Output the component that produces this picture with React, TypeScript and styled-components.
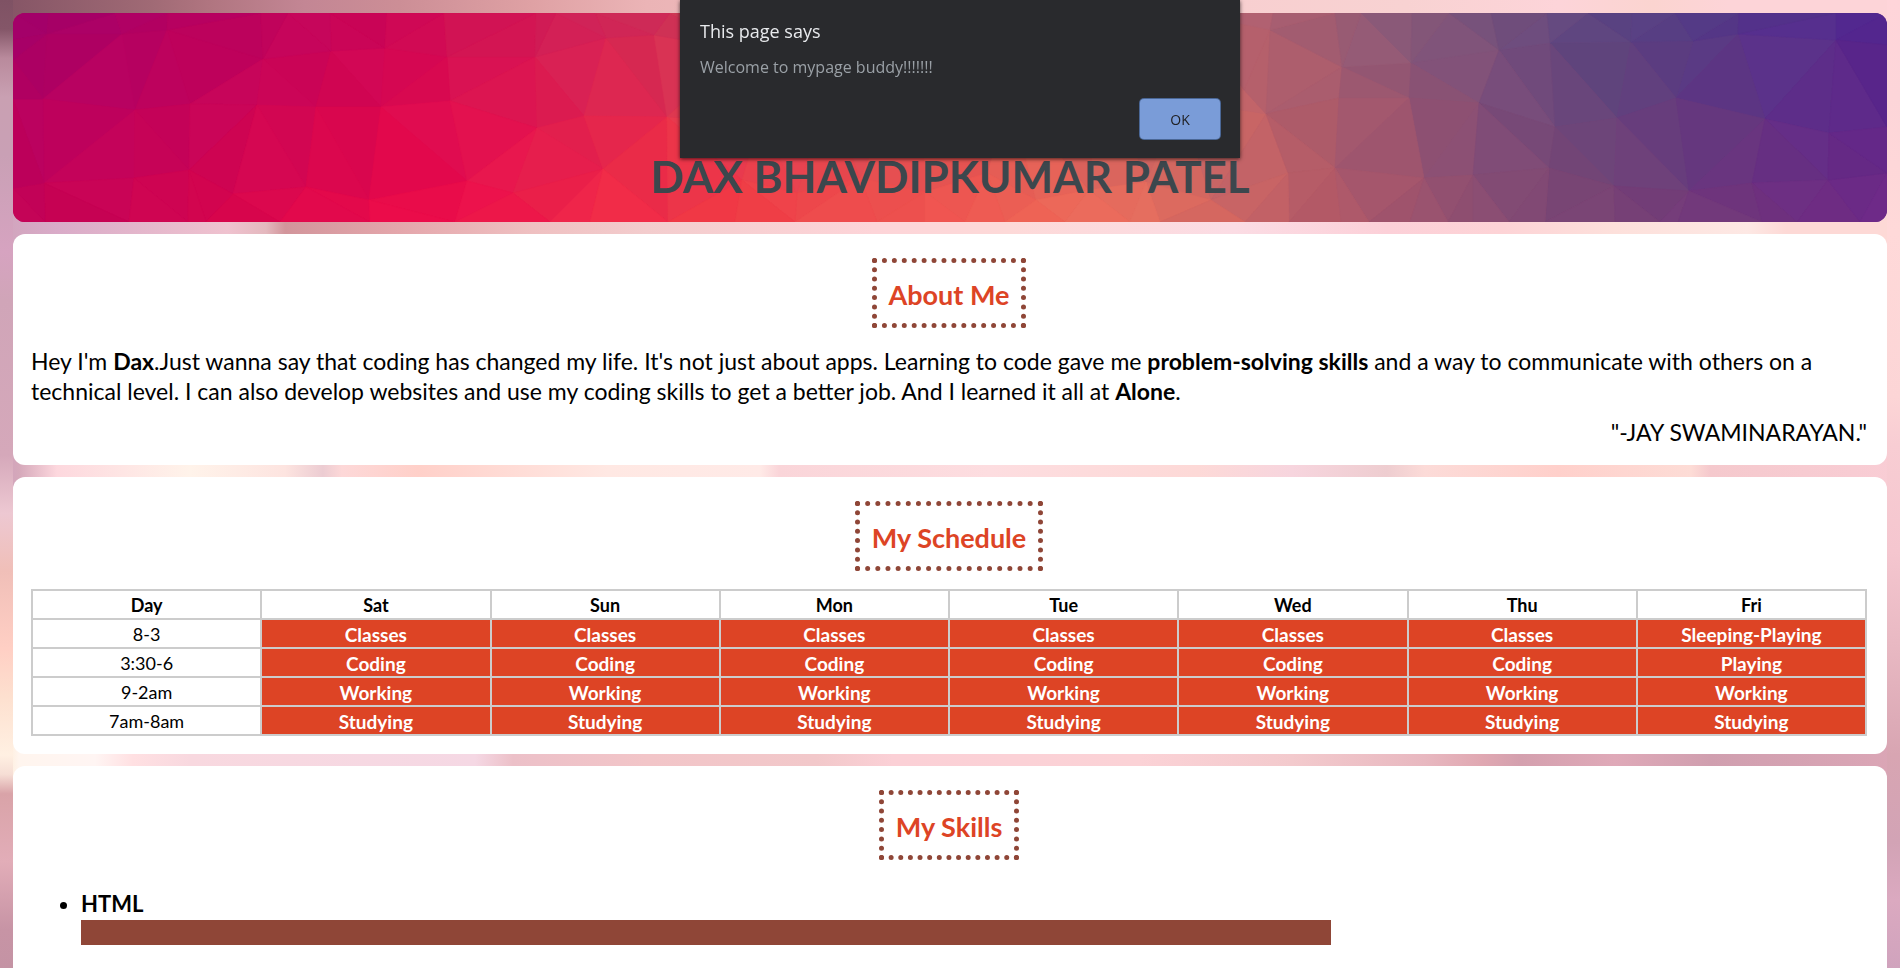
import React, { useMemo, useState } from "react";
import styled, { createGlobalStyle, css } from "styled-components";

const color = {
  accent: "#dd4425",
  brown: "#8f4637",
  rule: "#cccccc",
  title: "#3c474d",
  dialog: "#292a2d",
};

const hand = `"Comic Sans MS", "Comic Sans", Lato, sans-serif`;
const system = `"Segoe UI", "Open Sans", "Noto Sans", sans-serif`;

/* Soft pink bokeh: two vertical edge washes over four horizontal ones. */
const leftWash = `linear-gradient(180deg, #7f5264 0%, #845668 3%, #b98a9c 6%, #c9a0b2 10%, #c9a0b5 16%,
  #d6a3c0 26%, #d0a5b8 31%, #d5a8ba 47%, #edc8d2 53%, #f0bfb8 59%, #ffcfc4 67%, #fde0cf 72%,
  #fff0e2 78%, #f6ded5 80%, #d9a3a8 82%, #e2adb8 89%, #c794a5 96%, #c493a4 100%)`;
const rightWash = `linear-gradient(180deg, #ffd5da 0%, #fdd5d9 10%, #ffd9d9 24%, #fcd5d6 41%, #f8cdd3 46%,
  #f5c6cf 57%, #e8b8c2 67%, #d8a5b2 78%, #d2a3b5 87%, #dba9c0 93%, #d0a3bd 100%)`;
const topWash = `linear-gradient(90deg, #845465 0%, #a06a75 8%, #b07580 11%, #c38694 16%, #cc8e96 21%,
  #dfa1a4 28%, #ebb4b6 34%, #f8cfd0 65%, #f8d2d2 74%, #fdd4d9 82%, #fbd4d0 87%, #fdd4d8 91%)`;
const upperWash = `linear-gradient(90deg, #d0a4bc 0%, #d9abc8 3%, #efc2cf 12%, #e4b8be 14%, #d2959b 15%,
  #e4a6ab 21%, #efc0c1 28%, #f3cccd 34%, #fdd4d8 46%, #fdd9d8 53%, #fbdce4 65%, #fcd0d8 73%,
  #fdd3d6 79%, #fde0db 85%, #fde8e4 92%, #fdd9d6 94%)`;
const middleWash = `linear-gradient(90deg, #cfa0bd 0%, #d5a8ba 1%, #fdd8de 3%, #fff3ea 10%, #fde4e0 15%, #ecccd2 17%,
  #fdd8d8 18%, #ffd0c9 22%, #ffe8e3 32%, #ffeae7 40%, #fad5d9 41%, #fddde0 52%, #fdd9d7 63%,
  #f7d5de 68%, #eecdd0 73%, #fcdbd8 75%, #ffd0cb 82%, #fddcd6 89%, #f5c9cd 90%, #f9cdd5 100%)`;
const lowerWash = `linear-gradient(90deg, #fde8cf 0%, #fff5ee 1%, #fff5f3 5%, #ffe0e2 7%, #f8d8df 10%,
  #f5d8e4 25%, #ecc0c8 27%, #f2c5c8 34%, #f2c8ca 43%, #fbd0d6 47%, #fbd2d6 60%, #f3cacd 68%,
  #e8b8c0 75%, #e0a8b2 78%, #d4a0ae 80%, #dfa9b8 85%, #d09faf 90%, #dba6b6 100%)`;

const GlobalStyle = createGlobalStyle`
  *, *::before, *::after { box-sizing: border-box; }
  body {
    margin: 0;
    color: #000;
    font-family: ${hand};
    background:
      ${leftWash} left top / 13px 100% no-repeat,
      ${rightWash} right top / 13px 100% no-repeat,
      ${topWash} left 0 top 0 / 100% 120px no-repeat,
      ${upperWash} left 0 top 120px / 100% 230px no-repeat,
      ${middleWash} left 0 top 350px / 100% 260px no-repeat,
      ${lowerWash} left 0 top 610px / 100% 100% no-repeat;
    background-attachment: fixed;
  }
`;

const Page = styled.main`
  display: flex;
  flex-direction: column;
  gap: 12px;
  min-height: 100vh;
  padding: 13px 13px 0;
`;

const Hero = styled.header`
  display: grid;
  height: 209px;
  overflow: hidden;
  border-radius: 12px;
  background: linear-gradient(90deg, #b8005f, #e5104d 30%, #f05550 50%, #b05d6a 70%, #5f2588);
  > * { grid-area: 1 / 1; }
`;

const MeshArt = styled.svg`
  display: block;
  width: 100%;
  height: 209px;
`;

const Title = styled.h1`
  align-self: end;
  margin: 0 0 14px;
  color: ${color.title};
  font-size: 44px;
  line-height: 64px;
  text-align: center;
`;

const Card = styled.section<{ $open?: boolean }>`
  display: flex;
  flex-direction: column;
  padding: 24px 20px 18px 18px;
  background: #fff;
  border-radius: 12px;
  ${(p) => p.$open && css`
    flex: 1;
    border-radius: 12px 12px 0 0;
  `}
`;

const CardTitle = styled.h2`
  align-self: center;
  margin: 0 0 18px;
  padding: 4px 12px 0;
  border: 5px dotted ${color.brown};
  color: ${color.accent};
  font-size: 27px;
  line-height: 56px;
`;

const Paragraph = styled.p`
  margin: 0;
  font-size: 23px;
  line-height: 30px;
`;

const Signature = styled(Paragraph)`
  margin-top: 11px;
  text-align: right;
`;

const Timetable = styled.table`
  width: 100%;
  table-layout: fixed;
  border-collapse: collapse;
  font-size: 18px;
  line-height: 25px;
  text-align: center;
`;

const cell = css`
  padding: 2px 0 0;
  border: 2px solid ${color.rule};
`;
const HeadCell = styled.th`${cell}`;
const HourCell = styled.th`
  ${cell}
  font-weight: 400;
`;
const TaskCell = styled.td`
  ${cell}
  color: #fff;
  background: ${color.accent};
  font-size: 19px;
  font-weight: 700;
`;

const SkillList = styled.ul`
  margin: 11px 0 0;
  padding-left: 50px;
`;

const Skill = styled.li`
  font-size: 22px;
  font-weight: 700;
  line-height: 30px;
`;

const SkillBar = styled.div`
  height: 25px;
  margin-top: 1px;
  background: ${color.brown};
`;

const Dialog = styled.div`
  position: fixed;
  top: 0;
  left: 50%;
  display: flex;
  flex-direction: column;
  width: 560px;
  height: 158px;
  margin-left: -270px;
  padding: 17px 20px 19px;
  background: ${color.dialog};
  box-shadow: 0 1px 4px rgba(0, 0, 0, 0.7);
  font-family: ${system};
`;

const DialogTitle = styled.h2`
  margin: 0;
  color: #e8eaed;
  font-size: 18px;
  font-weight: 400;
  line-height: 28px;
`;

const DialogText = styled.p`
  margin: 10px 0 0;
  color: #9aa0a6;
  font-size: 16px;
  line-height: 24px;
`;

const DialogButton = styled.button`
  align-self: flex-end;
  width: 80px;
  height: 40px;
  margin-top: auto;
  border: 0;
  border-radius: 4px;
  background: #7a9cd8;
  box-shadow: 0 0 0 1px #4a6796;
  color: #202124;
  font: 14px ${system};
`;

/* ---- low-poly banner ---- */

type Point = [number, number];
type RGB = [number, number, number];

const LEFT = 13, TOP = 13, RIGHT = 1887, BOTTOM = 222;

const inner: Point[] = [
  [47, 34], [122, 34], [167, 30], [263, 59], [331, 51], [385, 48], [447, 57], [535, 57], [606, 38],
  [43, 99], [135, 110], [190, 104], [257, 105], [316, 107], [381, 107], [450, 101], [537, 128], [584, 116],
  [44, 183], [134, 178], [189, 170], [233, 194], [306, 187], [369, 200], [467, 181], [513, 193], [603, 169],
  [654, 35], [667, 117], [742, 180], [797, 193], [860, 178], [925, 192], [987, 173], [1036, 200], [1089, 190],
  [1146, 182], [1211, 200], [740, 50], [830, 90], [920, 40], [1010, 95], [1100, 50], [1180, 100], [760, 120],
  [1244, 90], [1270, 30], [1342, 67], [1411, 63], [1499, 50], [1550, 43], [1631, 42], [1693, 41], [1738, 34],
  [1836, 40], [1266, 114], [1339, 98], [1409, 98], [1479, 103], [1555, 127], [1617, 118], [1676, 98],
  [1765, 119], [1829, 133], [1288, 173], [1335, 168], [1424, 178], [1473, 175], [1549, 168], [1614, 186],
  [1689, 191], [1752, 183], [1828, 180],
];
const topEdge = [13, 49, 115, 168, 261, 288, 330, 387, 444, 536, 556, 595, 670, 780, 880, 980, 1090, 1190,
  1273, 1335, 1361, 1412, 1449, 1491, 1547, 1588, 1632, 1675, 1739, 1836, 1887];
const bottomEdge = [13, 45, 129, 188, 206, 280, 370, 455, 550, 590, 668, 735, 795, 877, 925, 965, 1005, 1065,
  1130, 1160, 1245, 1289, 1341, 1369, 1410, 1448, 1473, 1509, 1545, 1615, 1660, 1678, 1762, 1797, 1860, 1887];
const points: Point[] = [
  ...inner,
  ...topEdge.map((x): Point => [x, TOP]),
  ...bottomEdge.map((x): Point => [x, BOTTOM]),
  ...[40, 60, 99, 188].map((y): Point => [LEFT, y]),
  ...[45, 127, 173].map((y): Point => [RIGHT, y]),
];

/* x, then the colours at the top, middle and bottom of the banner */
const ramp: [number, string, string, string][] = [
  [13, "9e006b", "b8005f", "c30356"],
  [150, "b00062", "c1025c", "d0044f"],
  [300, "c2045c", "d10653", "e0084a"],
  [400, "cc0655", "dc064f", "ec0c4a"],
  [480, "cf1455", "e01050", "ee1249"],
  [560, "cf1e57", "df1d50", "ef2248"],
  [640, "cc2a58", "e3284c", "f42f45"],
  [740, "cc3c58", "e43c50", "f33d45"],
  [850, "cc4558", "e44850", "ee4c4c"],
  [950, "cc5058", "e45553", "f05550"],
  [1050, "c85a60", "dc6058", "f06757"],
  [1150, "c06068", "d06560", "e8705f"],
  [1240, "b06070", "c26468", "cc6462"],
  [1300, "a55e72", "b05d6a", "bb5c65"],
  [1400, "865a7a", "985470", "a2546c"],
  [1500, "72507c", "7c4c79", "884c72"],
  [1600, "5a4582", "664479", "7a4374"],
  [1700, "523a86", "63397f", "743a7a"],
  [1800, "532f8e", "602e88", "702d80"],
  [1887, "502490", "5f2588", "702988"],
];

const rgb = (hex: string): RGB => [0, 2, 4].map((i) => parseInt(hex.slice(i, i + 2), 16)) as RGB;
const mix = (a: RGB, b: RGB, t: number) => a.map((v, i) => v + (b[i] - v) * t) as RGB;

function shade(x: number, y: number, seed: number) {
  const at = Math.max(1, ramp.findIndex((stop) => stop[0] >= x));
  const a = ramp[at - 1];
  const b = ramp[at];
  const t = (x - a[0]) / (b[0] - a[0]);
  const rows = [1, 2, 3].map((i) => mix(rgb(a[i] as string), rgb(b[i] as string), t));
  const v = ((y - TOP) / (BOTTOM - TOP)) * 2;
  const base = v < 1 ? mix(rows[0], rows[1], v) : mix(rows[1], rows[2], v - 1);
  const shift = ((seed * 37) % 3) - 1;
  return `rgb(${base.map((c) => Math.round(Math.min(255, Math.max(0, c + shift)))).join(",")})`;
}

/* Bowyer-Watson triangulation */
function triangulate(source: Point[]) {
  const n = source.length;
  const pts: Point[] = [...source, [-90000, -50000], [90000, -50000], [950, 120000]];
  const outside = (t: number[], p: Point) => {
    const [a, b, c] = t.map((i) => pts[i]);
    const d = 2 * (a[0] * (b[1] - c[1]) + b[0] * (c[1] - a[1]) + c[0] * (a[1] - b[1]));
    if (Math.abs(d) < 1e-9) return false;
    const q = [a, b, c].map((k) => k[0] * k[0] + k[1] * k[1]);
    const ux = (q[0] * (b[1] - c[1]) + q[1] * (c[1] - a[1]) + q[2] * (a[1] - b[1])) / d;
    const uy = (q[0] * (c[0] - b[0]) + q[1] * (a[0] - c[0]) + q[2] * (b[0] - a[0])) / d;
    return Math.hypot(p[0] - ux, p[1] - uy) >= Math.hypot(a[0] - ux, a[1] - uy);
  };
  let tris: number[][] = [[n, n + 1, n + 2]];
  for (let i = 0; i < n; i++) {
    const keep: number[][] = [];
    const edges = new Map<string, number[]>();
    for (const t of tris) {
      if (outside(t, pts[i])) {
        keep.push(t);
        continue;
      }
      for (const [a, b] of [[t[0], t[1]], [t[1], t[2]], [t[2], t[0]]]) {
        const key = a < b ? `${a}-${b}` : `${b}-${a}`;
        if (edges.has(key)) edges.delete(key);
        else edges.set(key, [a, b]);
      }
    }
    tris = [...keep, ...[...edges.values()].map(([a, b]) => [a, b, i])];
  }
  return tris.filter((t) => t.every((i) => i < n));
}

function Mesh() {
  const facets = useMemo(
    () =>
      triangulate(points).map((t, i) => {
        const corners = t.map((k) => points[k]);
        const cx = corners.reduce((s, p) => s + p[0], 0) / 3;
        const cy = corners.reduce((s, p) => s + p[1], 0) / 3;
        return { d: corners.map((p) => p.join(",")).join(" "), fill: shade(cx, cy, i) };
      }),
    [],
  );
  return (
    <MeshArt viewBox={`${LEFT} ${TOP} ${RIGHT - LEFT} ${BOTTOM - TOP}`} preserveAspectRatio="none" aria-hidden="true">
      {facets.map((f) => (
        <polygon key={f.d} points={f.d} fill={f.fill} stroke={f.fill} strokeWidth="0.6" />
      ))}
    </MeshArt>
  );
}

/* ---- content ---- */

const days = ["Sat", "Sun", "Mon", "Tue", "Wed", "Thu", "Fri"];
const schedule = [
  { hours: "8-3", task: "Classes", friday: "Sleeping-Playing" },
  { hours: "3:30-6", task: "Coding", friday: "Playing" },
  { hours: "9-2am", task: "Working", friday: "Working" },
  { hours: "7am-8am", task: "Studying", friday: "Studying" },
];
const skills = [{ name: "HTML", level: 70 }];

export default function App() {
  const [greeting, setGreeting] = useState(true);

  return (
    <>
      <GlobalStyle />
      <Page>
        <Hero>
          <Mesh />
          <Title>DAX BHAVDIPKUMAR PATEL</Title>
        </Hero>

        <Card>
          <CardTitle>About Me</CardTitle>
          <Paragraph>
            Hey I'm <b>Dax</b>.Just wanna say that coding has changed my life. It's not just about apps. Learning to
            code gave me <b>problem-solving skills</b> and a way to communicate with others on a technical level. I can
            also develop websites and use my coding skills to get a better job. And I learned it all at <b>Alone</b>.
          </Paragraph>
          <Signature>"-JAY SWAMINARAYAN."</Signature>
        </Card>

        <Card>
          <CardTitle>My Schedule</CardTitle>
          <Timetable>
            <thead>
              <tr>
                <HeadCell scope="col">Day</HeadCell>
                {days.map((day) => (
                  <HeadCell key={day} scope="col">{day}</HeadCell>
                ))}
              </tr>
            </thead>
            <tbody>
              {schedule.map((row) => (
                <tr key={row.hours}>
                  <HourCell scope="row">{row.hours}</HourCell>
                  {days.map((day) => (
                    <TaskCell key={day}>{day === "Fri" ? row.friday : row.task}</TaskCell>
                  ))}
                </tr>
              ))}
            </tbody>
          </Timetable>
        </Card>

        <Card $open>
          <CardTitle>My Skills</CardTitle>
          <SkillList>
            {skills.map((skill) => (
              <Skill key={skill.name}>
                {skill.name}
                <SkillBar style={{ width: `${skill.level}%` }} />
              </Skill>
            ))}
          </SkillList>
        </Card>
      </Page>

      {greeting && (
        <Dialog role="alertdialog" aria-labelledby="greeting-title" aria-describedby="greeting-text">
          <DialogTitle id="greeting-title">This page says</DialogTitle>
          <DialogText id="greeting-text">Welcome to mypage buddy!!!!!!!</DialogText>
          <DialogButton type="button" onClick={() => setGreeting(false)}>OK</DialogButton>
        </Dialog>
      )}
    </>
  );
}
